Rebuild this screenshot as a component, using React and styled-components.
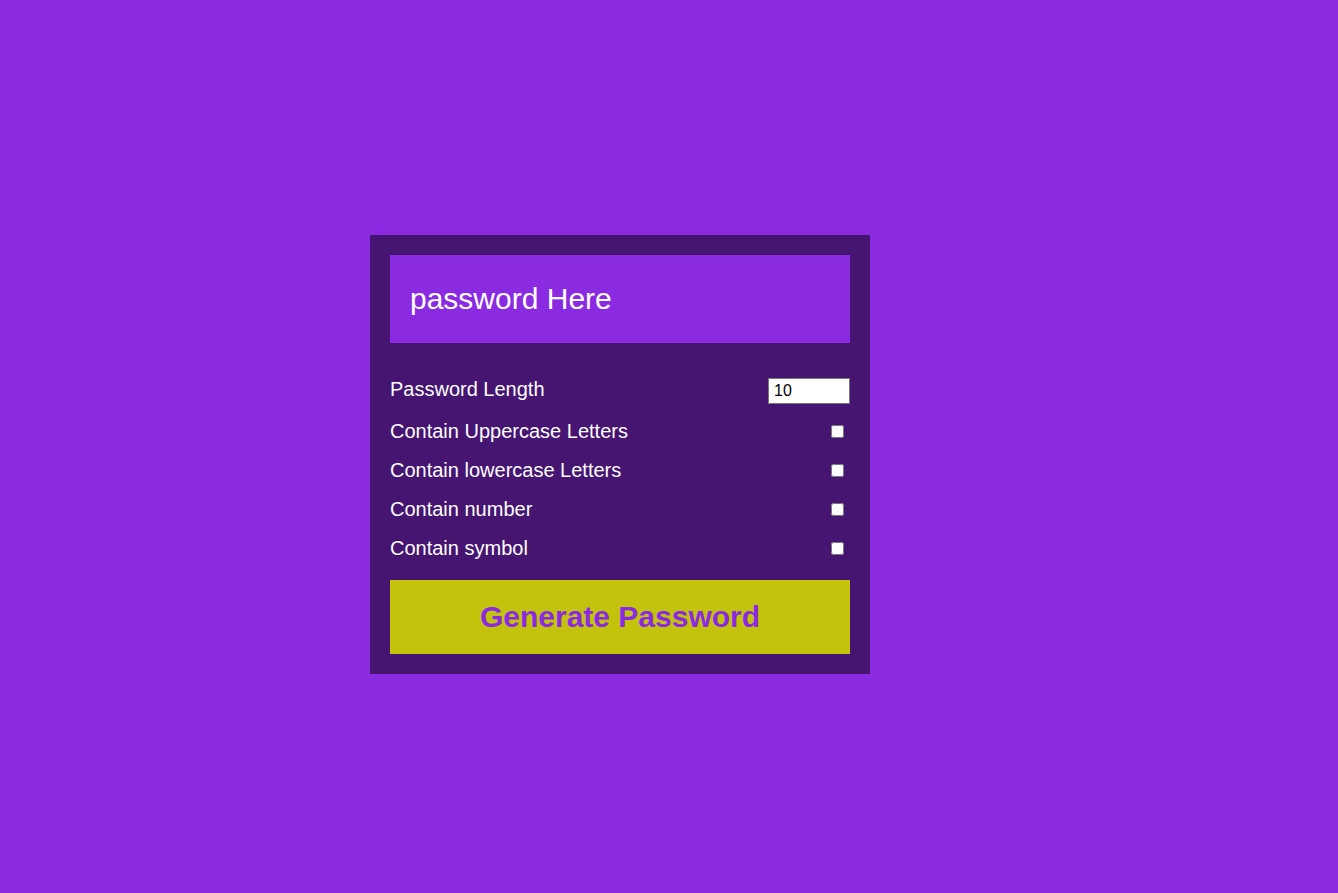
import { useState } from 'react'
import styled, { createGlobalStyle } from 'styled-components'

const GlobalStyle = createGlobalStyle`
  html, body {
    margin: 0;
    padding: 0;
    background: #8a2be2;
    font-family: "Liberation Sans", Arial, sans-serif;
  }
`

const Page = styled.div`
  min-height: 893px;
  padding: 235px 0 0 370px;
  box-sizing: border-box;
`

const Card = styled.div`
  width: 500px;
  box-sizing: border-box;
  padding: 20px;
  background: rgba(0, 0, 0, 0.5);
  display: flex;
  flex-direction: column;
`

const Result = styled.div`
  height: 88px;
  background: #8a2be2;
  color: #fff;
  font-size: 30px;
  padding: 0 20px;
  display: flex;
  align-items: center;
  margin-bottom: 35px;
`

const Options = styled.div`
  display: flex;
  flex-direction: column;
  gap: 16px;
  margin-bottom: 20px;
`

const Row = styled.label`
  display: flex;
  justify-content: space-between;
  align-items: ${(p) => (p.$top ? 'flex-start' : 'center')};
  color: #fff;
  font-size: 20px;
  line-height: 23px;
`

const LengthInput = styled.input`
  width: 82px;
  height: 26px;
  box-sizing: border-box;
  font-family: "Liberation Sans", Arial, sans-serif;
  font-size: 16px;
  padding: 0 5px;
  border: 1px solid #767676;
  margin: 0;
`

const Check = styled.input`
  width: 13px;
  height: 13px;
  margin: 0 6px 0 0;
`

const GenerateButton = styled.button`
  height: 74px;
  border: none;
  background: #c4c30b;
  color: #8a2be2;
  font-family: "Liberation Sans", Arial, sans-serif;
  font-size: 30px;
  font-weight: bold;
  cursor: pointer;
`

const options = [
  'Contain Uppercase Letters',
  'Contain lowercase Letters',
  'Contain number',
  'Contain symbol',
]

export default function App() {
  const [length, setLength] = useState(10)
  return (
    <Page>
      <GlobalStyle />
      <Card>
        <Result>password Here</Result>
        <Options>
          <Row $top>
            <span>Password Length</span>
            <LengthInput
              type="number"
              value={length}
              onChange={(e) => setLength(e.target.value)}
            />
          </Row>
          {options.map((text) => (
            <Row key={text}>
              <span>{text}</span>
              <Check type="checkbox" />
            </Row>
          ))}
        </Options>
        <GenerateButton>Generate Password</GenerateButton>
      </Card>
    </Page>
  )
}
